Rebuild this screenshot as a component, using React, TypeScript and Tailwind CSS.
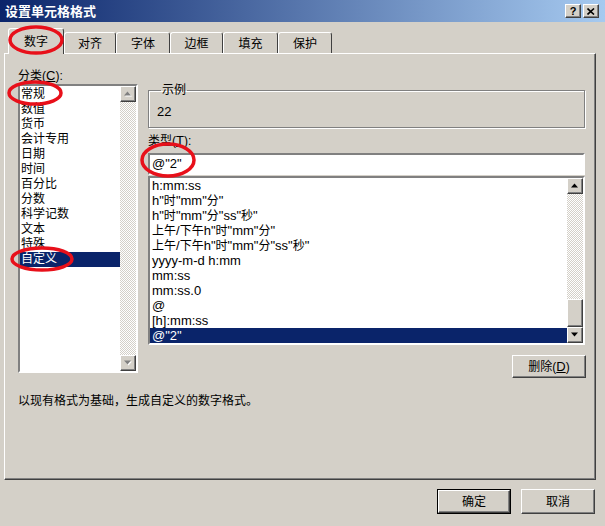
import React from "react";

const CJK = /[\u3000-\u9fff\uff00-\uffef]/;

// Latin runs at 13px, CJK runs at 12px, like the classic dialog fonts
function Mixed({ text }: { text: string }) {
  const parts = text.split(/([\u3000-\u9fff\uff00-\uffef]+)/);
  return (
    <>
      {parts.map((p, i) =>
        p ? (
          <span key={i} className={CJK.test(p) ? "text-[12px]" : "text-[13px]"}>
            {p}
          </span>
        ) : null
      )}
    </>
  );
}

const sunken =
  "border-2 border-t-[#808080] border-l-[#808080] border-r-white border-b-white";
const raised =
  "border border-t-white border-l-white border-r-[#404040] border-b-[#404040] shadow-[inset_-1px_-1px_0_#808080]";

function Arrow({ up, enabled }: { up?: boolean; enabled: boolean }) {
  return (
    <div className={`w-[16px] h-[16px] bg-[#d4d0c8] flex items-center justify-center ${raised}`}>
      <svg width="8" height="6" viewBox="0 0 8 6">
        {enabled ? (
          <polygon points={up ? "3.5,0.5 7,4.5 0,4.5" : "0,0.5 7,0.5 3.5,4.5"} fill="#000" />
        ) : (
          <>
            <polygon points={up ? "4.5,1.5 8,5.5 1,5.5" : "1,1.5 8,1.5 4.5,5.5"} fill="#fff" />
            <polygon points={up ? "3.5,0.5 7,4.5 0,4.5" : "0,0.5 7,0.5 3.5,4.5"} fill="#808080" />
          </>
        )}
      </svg>
    </div>
  );
}

function ScrollBar({ enabled, thumb }: { enabled: boolean; thumb?: boolean }) {
  return (
    <div className="w-[16px] h-full flex flex-col shrink-0">
      <Arrow up enabled={enabled} />
      <div className="flex-1 flex flex-col justify-end bg-[repeating-conic-gradient(#ffffff_0_25%,#d4d0c8_0_50%)] bg-[length:2px_2px]">
        {thumb && <div className={`h-[28px] bg-[#d4d0c8] ${raised}`} />}
      </div>
      <Arrow enabled={enabled} />
    </div>
  );
}

const categories = ["常规", "数值", "货币", "会计专用", "日期", "时间", "百分比", "分数", "科学记数", "文本", "特殊", "自定义"];

const types = [
  "h:mm:ss",
  'h"时"mm"分"',
  'h"时"mm"分"ss"秒"',
  '上午/下午h"时"mm"分"',
  '上午/下午h"时"mm"分"ss"秒"',
  "yyyy-m-d h:mm",
  "mm:ss",
  "mm:ss.0",
  "@",
  "[h]:mm:ss",
  '@"2"',
];

const tabs = [
  { label: "对齐", w: "w-[52px]" },
  { label: "字体", w: "w-[54px]" },
  { label: "边框", w: "w-[53px]" },
  { label: "填充", w: "w-[55px]" },
  { label: "保护", w: "w-[54px]" },
];

const tabBase =
  "bg-[#d4d0c8] border-t border-l border-white border-r border-r-[#404040] rounded-t-[3px] flex items-center justify-center text-[12px]";

export default function App() {
  return (
    <div className="relative w-[605px] h-[526px] bg-[#d4d0c8] overflow-hidden text-black font-['Liberation_Sans','Noto_Sans_CJK_SC',sans-serif] text-[13px]">
      {/* Title bar */}
      <div className="h-[22px] flex items-center justify-between pl-[5px] pr-[6px] bg-[linear-gradient(to_right,#0a246a,#a6caf0)]">
        <span className="text-white font-bold text-[13px] leading-none">设置单元格格式</span>
        <div className="flex gap-[2px]">
          <div className={`w-[16px] h-[14px] bg-[#d4d0c8] flex items-center justify-center text-[11px] font-bold leading-none ${raised}`}>?</div>
          <div className={`w-[16px] h-[14px] bg-[#d4d0c8] flex items-center justify-center ${raised}`}>
            <svg width="8" height="7" viewBox="0 0 8 7">
              <path d="M0.5 0.5 L7 6.5 M7 0.5 L0.5 6.5" stroke="#000" strokeWidth="1.6" />
            </svg>
          </div>
        </div>
      </div>

      {/* Tabs */}
      <div className="h-[31px] flex items-end pl-[8px]">
        <div className={`relative z-10 -mb-[1px] w-[56px] h-[26px] ${tabBase}`}>数字</div>
        {tabs.map((t) => (
          <div key={t.label} className={`${t.w} h-[21px] pt-[1px] ${tabBase}`}>
            {t.label}
          </div>
        ))}
      </div>

      {/* Tab panel */}
      <div className="ml-[4px] w-[592px] h-[427px] border border-t-white border-l-white border-r-[#404040] border-b-[#404040] shadow-[inset_-1px_-1px_0_#808080] pl-[13px] pt-[13px]">
        <div className="flex">
          {/* Category column */}
          <div className="w-[120px]">
            <div className="h-[17px] leading-[17px] text-[12px]">
              分类(<span className="underline text-[13px]">C</span>):
            </div>
            <div className={`h-[289px] bg-white flex ${sunken}`}>
              <div className="flex-1 pt-[1px]">
                {categories.map((c, i) => (
                  <div
                    key={c}
                    className={`h-[15px] leading-[15px] pl-[1px] text-[12px] ${i === 11 ? "bg-[#0a246a] text-white" : ""}`}
                  >
                    {c}
                  </div>
                ))}
              </div>
              <ScrollBar enabled={false} />
            </div>
          </div>

          {/* Right column */}
          <div className="ml-[10px] w-[437px] pt-[16px] flex flex-col">
            <fieldset className="h-[45px] border border-[#808080] shadow-[inset_1px_1px_0_#fff,1px_1px_0_#fff] px-[8px]">
              <legend className="ml-[4px] px-[1px] text-[12px] leading-[14px]">示例</legend>
              <div className="pt-[7px] leading-[15px]">22</div>
            </fieldset>

            <div className="mt-[4px] h-[17px] leading-[17px] text-[12px]">
              类型(<span className="underline text-[13px]">T</span>):
            </div>
            <div className={`mt-[4px] h-[22px] bg-white pl-[2px] leading-[18px] ${sunken}`}>@"2"</div>

            <div className={`mt-[1px] h-[169px] bg-white flex ${sunken}`}>
              <div className="flex-1">
                {types.map((t, i) => (
                  <div
                    key={t}
                    className={`h-[15px] leading-[15px] pl-[2px] whitespace-nowrap ${i === types.length - 1 ? "bg-[#0a246a] text-white" : ""}`}
                  >
                    <Mixed text={t} />
                  </div>
                ))}
              </div>
              <ScrollBar enabled thumb />
            </div>

            <div className="mt-[10px] self-end mr-[-1px]">
              <button className={`w-[74px] h-[23px] bg-[#d4d0c8] flex items-center justify-center text-[12px] ${raised}`}>
                删除(<span className="underline text-[13px]">D</span>)
              </button>
            </div>
          </div>
        </div>

        <div className="mt-[16px] text-[12px] leading-[15px]">以现有格式为基础，生成自定义的数字格式。</div>
      </div>

      {/* Dialog buttons */}
      <div className="mt-[9px] flex justify-end gap-[10px] pr-[10px]">
        <div className="border border-black">
          <button className={`w-[72px] h-[23px] bg-[#d4d0c8] flex items-center justify-center text-[12px] ${raised}`}>确定</button>
        </div>
        <button className={`w-[74px] h-[25px] bg-[#d4d0c8] flex items-center justify-center text-[12px] ${raised}`}>取消</button>
      </div>

      {/* Red annotation rings drawn over the dialog */}
      <svg className="absolute inset-0 z-20 pointer-events-none" width="605" height="526">
        <g fill="none" stroke="#e8101a" strokeWidth="3.5">
          <ellipse cx="36" cy="40" rx="26" ry="13" />
          <ellipse cx="35" cy="93" rx="26" ry="11" />
          <ellipse cx="42" cy="259" rx="30" ry="11" />
          <ellipse cx="168" cy="160" rx="26" ry="16" />
        </g>
      </svg>
    </div>
  );
}
